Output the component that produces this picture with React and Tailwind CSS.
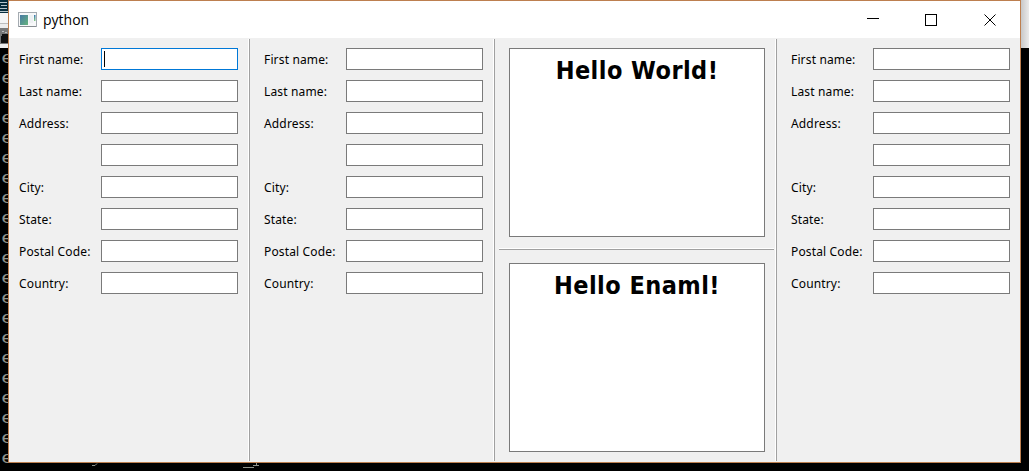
const LABELS = ["First name:", "Last name:", "Address:", "", "City:", "State:", "Postal Code:", "Country:"];

function Form({ focused = false, className }) {
  return (
    <div className={`flex shrink-0 flex-col gap-2.5 pt-2.5 pr-2.5 ${className}`}>
      {LABELS.map((label, i) => (
        <div key={i} className="flex h-[22px] shrink-0">
          <div className="w-[82px] shrink-0 whitespace-nowrap pt-px font-['Noto_Sans',sans-serif] text-[12px] leading-[22px] tracking-[0.15px]">
            {label}
          </div>
          <div className={`w-[137px] shrink-0 border bg-white ${focused && i === 0 ? "border-[#0078d7]" : "border-[#7a7a7a]"}`}>
            {focused && i === 0 && <div className="mt-0.5 ml-0.5 h-4 w-px bg-black" />}
          </div>
        </div>
      ))}
    </div>
  );
}

function Divider() {
  return <div className="mt-px mb-px w-0.5 shrink-0 border-r border-[#a0a0a0] bg-white" />;
}

function Pane({ children, className }) {
  return (
    <div className={`h-[189px] w-64 shrink-0 border border-[#7a7a7a] bg-white pt-px text-center font-['DejaVu_Sans_Condensed','DejaVu_Sans',sans-serif] text-[25px] leading-[42px] font-bold tracking-[0.45px] whitespace-nowrap ${className}`}>
      {children}
    </div>
  );
}

function Backdrop() {
  return (
    <div className="h-full w-full">
      <div className="flex h-12 justify-between">
        <div className="w-2">
          <svg width="8" height="48" shapeRendering="crispEdges">
            <path fill="#062c3b" d="M0 0h8v13H0z" />
            <path stroke="#b4c4ca" d="M0 2.5h7M1 5.5h6M0 8.5h7M0 11.5h8" />
            <path fill="#f4f4f4" d="M0 13h8v10H0z" />
            <path stroke="#bcbcbc" d="M0 23.5h8" />
            <path fill="#ececec" d="M0 24h8v4H0z" />
            <path fill="#777" d="M0 28h8v16H0z" />
            <path fill="#111" d="M2 34h6v9H1v-7h1z" />
            <path stroke="#bbb" d="M2 31.5h2M5 32.5h2" />
            <path fill="#eee" d="M0 44h8v4H0z" />
          </svg>
        </div>
        <div className="w-2 bg-gradient-to-r from-[#c8c8c8] to-[#ebebeb]" />
      </div>
      <div className="pt-px font-['Liberation_Mono',monospace] text-[16px] leading-5 text-[#8f928a]">
        {Array.from({ length: 21 }, (_, i) => (
          <div key={i} className="h-5 pl-px"><span className="inline-block origin-left scale-x-135">e</span></div>
        ))}
      </div>
    </div>
  );
}

export default function App() {
  return (
    <div className="relative h-[471px] w-[1029px] overflow-hidden bg-black text-black">
      <Backdrop />
      <svg className="absolute top-[463px] left-0" width="300" height="8" fill="none" stroke="#8f928a">
        <path d="M92 2.5h3l2-2M243 4.5h11M253 2.5h6M256.500 0v2" />
      </svg>
      <div className="absolute top-0 left-2 flex h-[463px] w-[1013px] flex-col border border-[#bd7f4f] bg-[#f0f0f0]">
        <div className="flex h-[37px] shrink-0 items-center bg-white">
          <svg className="ml-[9px] shrink-0" width="19" height="16">
            <defs>
              <linearGradient id="picture" x1="0" y1="0" x2="1" y2="1">
                <stop stopColor="#4779a5" />
                <stop offset="1" stopColor="#65b47c" />
              </linearGradient>
              <linearGradient id="bar" x1="0" y1="0" x2="0" y2="1">
                <stop stopColor="#3878b6" />
                <stop offset="1" stopColor="#83c783" />
              </linearGradient>
            </defs>
            <rect x=".5" y=".5" width="18" height="14" fill="#f7f8f9" stroke="#a5abb1" />
            <path d="M1 14.500h17" stroke="#888d92" />
            <rect x="2" y="3" width="8" height="10" fill="url(#picture)" />
            <path d="M11 3h4v8h-4z" fill="#edf0f3" />
            <rect x="16" y="3" width="1.500" height="6" fill="url(#bar)" />
          </svg>
          <span className="ml-1.5 font-['Open_Sans',sans-serif] text-[14px] leading-5">python</span>
          <svg className="ml-auto mr-[22px]" width="132" height="14" fill="none" stroke="black">
            <path d="M1 5.500h12" />
            <rect x="59.500" y="1.500" width="11" height="11" />
            <path d="M118.500 1.500l11 11M129.500 1.500l-11 11" />
          </svg>
        </div>
        <div className="flex min-h-0 flex-1">
          <Form focused className="pl-2.5" />
          <Divider />
          <Form className="pl-3.5" />
          <Divider />
          <div className="flex w-[280px] shrink-0 flex-col pt-2.5">
            <Pane className="ml-3.5">Hello World!</Pane>
            <div className="mt-[11px] ml-1 h-0.5 w-[275px] shrink-0 border-b border-[#a0a0a0] bg-white" />
            <Pane className="mt-[13px] ml-3.5">Hello Enaml!</Pane>
          </div>
          <Divider />
          <Form className="pl-3.5" />
        </div>
      </div>
    </div>
  );
}
